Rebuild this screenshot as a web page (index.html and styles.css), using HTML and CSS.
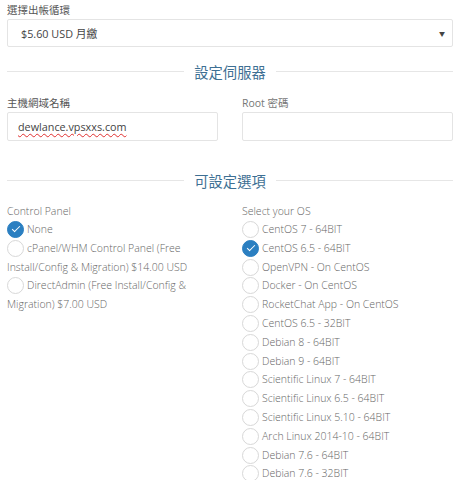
FILE: index.html
```html
<!DOCTYPE html>
<html>
<head>
<meta charset="utf-8">
<link rel="stylesheet" href="styles.css">
</head>
<body>
<div class="page">
  <div class="field">
    <div class="label">選擇出帳循環</div>
    <div class="select"><span>$5.60 USD 月繳</span><span class="caret">▼</span></div>
  </div>

  <div class="section"><span>設定伺服器</span></div>

  <div class="cols">
    <div class="field">
      <div class="label">主機網域名稱</div>
      <div class="input"><span class="spell">dewlance.vpsxxs.com</span></div>
    </div>
    <div class="field">
      <div class="label light">Root 密碼</div>
      <div class="input"></div>
    </div>
  </div>

  <div class="section s2"><span>可設定選項</span></div>

  <div class="cols opts">
    <div>
      <div class="olabel">Control Panel</div>
      <div class="opt"><span class="radio on"></span>None</div>
      <div class="opt"><span class="radio"></span>cPanel/WHM Control Panel (Free Install/Config &amp; Migration) $14.00 USD</div>
      <div class="opt"><span class="radio"></span>DirectAdmin (Free Install/Config &amp; Migration) $7.00 USD</div>
    </div>
    <div>
      <div class="olabel">Select your OS</div>
      <div class="opt"><span class="radio"></span>CentOS 7 - 64BIT</div>
      <div class="opt"><span class="radio on"></span>CentOS 6.5 - 64BIT</div>
      <div class="opt"><span class="radio"></span>OpenVPN - On CentOS</div>
      <div class="opt"><span class="radio"></span>Docker - On CentOS</div>
      <div class="opt"><span class="radio"></span>RocketChat App - On CentOS</div>
      <div class="opt"><span class="radio"></span>CentOS 6.5 - 32BIT</div>
      <div class="opt"><span class="radio"></span>Debian 8 - 64BIT</div>
      <div class="opt"><span class="radio"></span>Debian 9 - 64BIT</div>
      <div class="opt"><span class="radio"></span>Scientific Linux 7 - 64BIT</div>
      <div class="opt"><span class="radio"></span>Scientific Linux 6.5 - 64BIT</div>
      <div class="opt"><span class="radio"></span>Scientific Linux 5.10 - 64BIT</div>
      <div class="opt"><span class="radio"></span>Arch Linux 2014-10 - 64BIT</div>
      <div class="opt"><span class="radio"></span>Debian 7.6 - 64BIT</div>
      <div class="opt"><span class="radio"></span>Debian 7.6 - 32BIT</div>
    </div>
  </div>
</div>
</body>
</html>
```

FILE: styles.css
```css
html, body {
  margin: 0;
  padding: 0;
  background: #fff;
}
body {
  font-family: "Open Sans", "Noto Sans CJK TC", sans-serif;
  font-size: 10.5px;
  color: #555;
}
.page {
  width: 446px;
  padding: 3px 0 0 7px;
}
.label {
  line-height: 15px;
  color: #555;
}
.label.light { color: #777; }
.select {
  margin-top: 1px;
  height: 26px;
  border: 1px solid #e4e4e4;
  border-radius: 2px;
  display: flex;
  align-items: center;
  justify-content: space-between;
  padding: 0 7px 0 13px;
  font-size: 10.8px;
  color: #444;
}
.caret {
  font-size: 6px;
  color: #444;
}
.section {
  display: flex;
  align-items: center;
  gap: 10px;
  margin-top: 14px;
  height: 20px;
  color: #3d6f93;
  font-size: 14.3px;
}
.section::before, .section::after {
  content: "";
  flex: 1;
  height: 1px;
  background: #e6e6e6;
}
.cols {
  display: grid;
  grid-template-columns: 211px 211px;
  column-gap: 24px;
  margin-top: 15px;
}
.input {
  margin-top: 1px;
  height: 27px;
  border: 1px solid #e4e4e4;
  border-radius: 2px;
  display: flex;
  align-items: center;
  padding-left: 10px;
  font-size: 10.8px;
  color: #444;
}
.spell {
  text-decoration: underline wavy #e03030;
  text-decoration-thickness: 1px;
  text-underline-offset: 2px;
}
.section.s2 { margin-top: 29px; }
.opts { margin-top: 13px; }
.olabel {
  line-height: 17px;
  color: #666;
  font-weight: 300;
}
.opt {
  line-height: 18.8px;
  color: #666;
  font-weight: 300;
}
.radio {
  display: inline-block;
  width: 15px;
  height: 15px;
  border: 1px solid #d8d8d8;
  border-radius: 50%;
  vertical-align: -5px;
  margin-right: 3px;
  box-sizing: content-box;
  position: relative;
  background: #fff;
}
.radio.on {
  background: #2b7fc1;
  border-color: #2b7fc1;
}
.radio.on::after {
  content: "";
  position: absolute;
  left: 4px;
  top: 4px;
  width: 7px;
  height: 3px;
  border-left: 1.6px solid #fff;
  border-bottom: 1.6px solid #fff;
  transform: rotate(-45deg);
}
```
